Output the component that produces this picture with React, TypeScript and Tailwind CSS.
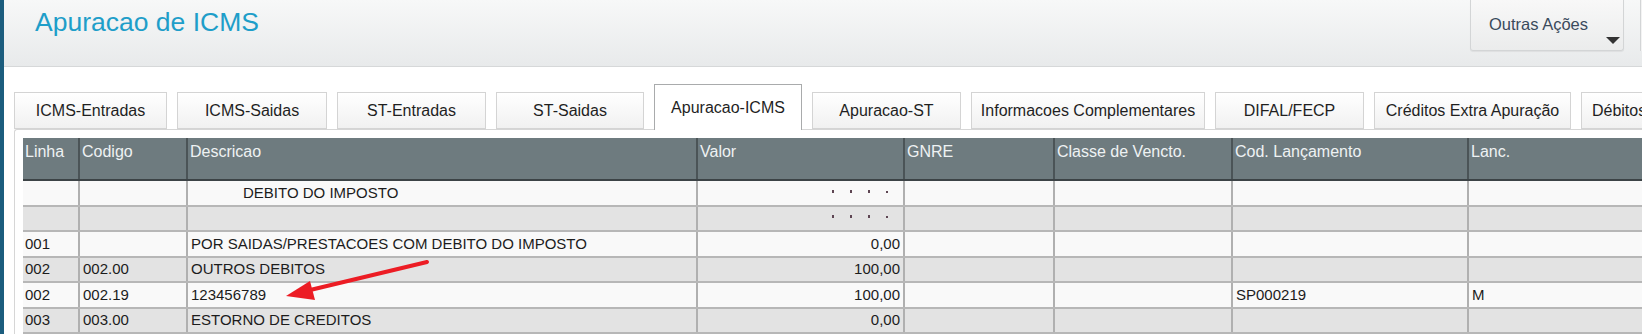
import React from 'react';

const font = { fontFamily: '"Liberation Sans", Arial, sans-serif' };

const tabs = [
  { label: 'ICMS-Entradas', w: 'w-[153px]' },
  { label: 'ICMS-Saidas', w: 'w-[150px]' },
  { label: 'ST-Entradas', w: 'w-[149px]' },
  { label: 'ST-Saidas', w: 'w-[148px]' },
  { label: 'Apuracao-ICMS', w: 'w-[148px]', active: true },
  { label: 'Apuracao-ST', w: 'w-[149px]' },
  { label: 'Informacoes Complementares', w: 'w-[234px]' },
  { label: 'DIFAL/FECP', w: 'w-[149px]' },
  { label: 'Créditos Extra Apuração', w: 'w-[197px]' },
  { label: 'Débitos Extra Apuração', w: 'w-[190px]' },
];

const cols = [
  { label: 'Linha', w: 'w-[57px]' },
  { label: 'Codigo', w: 'w-[108px]' },
  { label: 'Descricao', w: 'w-[510px]' },
  { label: 'Valor', w: 'w-[207px]' },
  { label: 'GNRE', w: 'w-[150px]' },
  { label: 'Classe de Vencto.', w: 'w-[178px]' },
  { label: 'Cod. Lançamento', w: 'w-[236px]' },
  { label: 'Lanc.', w: 'w-[200px]' },
];

type Row = {
  linha: string;
  codigo: string;
  desc: string;
  valor: string;
  lanc: string;
  tipo: string;
  indent?: boolean;
  ticks?: boolean;
};

const rows: Row[] = [
  { linha: '', codigo: '', desc: 'DEBITO DO IMPOSTO', valor: '', lanc: '', tipo: '', indent: true, ticks: true },
  { linha: '', codigo: '', desc: '', valor: '', lanc: '', tipo: '', ticks: true },
  { linha: '001', codigo: '', desc: 'POR SAIDAS/PRESTACOES COM DEBITO DO IMPOSTO', valor: '0,00', lanc: '', tipo: '' },
  { linha: '002', codigo: '002.00', desc: 'OUTROS DEBITOS', valor: '100,00', lanc: '', tipo: '' },
  { linha: '002', codigo: '002.19', desc: '123456789', valor: '100,00', lanc: 'SP000219', tipo: 'M' },
  { linha: '003', codigo: '003.00', desc: 'ESTORNO DE CREDITOS', valor: '0,00', lanc: '', tipo: '' },
];

const Ticks = () => (
  <div className="flex items-end gap-[16px] pb-[4px] pr-[12px]">
    <span className="w-[2px] h-[3px] bg-[#5e4653]" />
    <span className="w-[2px] h-[3px] bg-[#5e4653]" />
    <span className="w-[2px] h-[3px] bg-[#5e4653]" />
    <span className="w-[2px] h-[2px] bg-[#5e4653]" />
  </div>
);

export default function App() {
  return (
    <div className="relative w-[1642px] h-[334px] overflow-hidden bg-white flex" style={font}>
      <div className="w-[4px] shrink-0 bg-[#1c5d7e]" />

      <div className="flex-1 flex flex-col min-w-0">
        {/* page header */}
        <div className="h-[67px] shrink-0 flex justify-between bg-gradient-to-b from-[#f7f8f8] to-[#e8eaeb] border-b border-[#d6d8d9]">
          <h1 className="pl-[31px] pt-[7px] text-[26.5px] leading-[30px] text-[#1e9ec9]">Apuracao de ICMS</h1>
          <div className="flex items-start gap-[16px]">
            <button className="relative w-[154px] h-[51px] rounded-b-[3px] border border-t-0 border-[#d3d5d6] bg-gradient-to-b from-[#f8f8f8] to-[#ebecec] text-[16.5px] text-[#3a4a5c] shadow-[0_1px_1px_rgba(0,0,0,0.06)]">
              <span className="absolute top-[15px] left-[18px] leading-[18px] whitespace-nowrap">Outras Ações</span>
              <span className="absolute right-[3px] top-[37px] w-0 h-0 border-l-[7px] border-r-[7px] border-t-[7px] border-l-transparent border-r-transparent border-t-[#333]" />
            </button>
            <div className="w-[2px] h-[51px] border-l border-[#d3d5d6] bg-[#f3f3f3]" />
          </div>
        </div>

        {/* tabs */}
        <div className="flex items-end gap-[10px] pl-[10px] pt-[17px] shrink-0">
          {tabs.map((t) =>
            t.active ? (
              <div
                key={t.label}
                className={`${t.w} shrink-0 h-[46px] -mb-px relative z-10 flex items-center justify-center bg-white border border-b-0 border-[#a9abac] text-[16px] text-[#1f1f1f] whitespace-nowrap`}
              >
                {t.label}
              </div>
            ) : (
              <div
                key={t.label}
                className={`${t.w} shrink-0 h-[37px] flex items-center justify-center bg-gradient-to-b from-white to-[#f1f1f1] border border-[#d4d4d4] text-[16px] text-[#1f1f1f] whitespace-nowrap`}
              >
                {t.label}
              </div>
            )
          )}
        </div>

        {/* panel */}
        <div className="ml-[10px] flex-1 border-l border-t border-[#d6d6d6] rounded-tl-[3px] pl-[8px] pt-[8px] overflow-hidden">
          <div className="flex h-[43px] bg-[#6e7b7f] border-b-2 border-[#3c4346]">
            {cols.map((c) => (
              <div
                key={c.label}
                className={`${c.w} shrink-0 border-r-2 border-[#4b5457] pl-[2px] pt-[5px] text-[16px] leading-[18px] text-[#eef2f3] whitespace-nowrap`}
              >
                {c.label}
              </div>
            ))}
          </div>

          {rows.map((r, i) => (
            <div
              key={i}
              className={`flex border-b-2 border-[#b7b7b7] text-[15px] text-[#1c1c1c] ${i % 2 === 0 ? 'h-[26px] bg-[#f9f9f9]' : 'h-[25px] bg-[#e3e3e3]'}`}
            >
              <div className="w-[57px] shrink-0 border-r-2 border-[#b0b0b0] pl-[2px] flex items-center">{r.linha}</div>
              <div className="w-[108px] shrink-0 border-r-2 border-[#b0b0b0] pl-[3px] flex items-center">{r.codigo}</div>
              <div className={`w-[510px] shrink-0 border-r-2 border-[#b0b0b0] flex items-center whitespace-nowrap ${r.indent ? 'pl-[55px]' : 'pl-[3px]'}`}>
                {r.desc}
              </div>
              <div className="w-[207px] shrink-0 border-r-2 border-[#b0b0b0] pr-[3px] flex items-center justify-end">
                {r.ticks ? <Ticks /> : r.valor}
              </div>
              <div className="w-[150px] shrink-0 border-r-2 border-[#b0b0b0]" />
              <div className="w-[178px] shrink-0 border-r-2 border-[#b0b0b0]" />
              <div className="w-[236px] shrink-0 border-r-2 border-[#b0b0b0] pl-[3px] flex items-center">{r.lanc}</div>
              <div className="w-[200px] shrink-0 pl-[3px] flex items-center">{r.tipo}</div>
            </div>
          ))}
        </div>
      </div>

      {/* annotation arrow */}
      <svg className="absolute left-0 top-0 pointer-events-none" width="1642" height="334">
        <line x1="427" y1="262" x2="306" y2="291" stroke="#ec1c24" strokeWidth="4" strokeLinecap="round" />
        <polygon points="286,296 310,281 315,300" fill="#ec1c24" />
      </svg>
    </div>
  );
}
